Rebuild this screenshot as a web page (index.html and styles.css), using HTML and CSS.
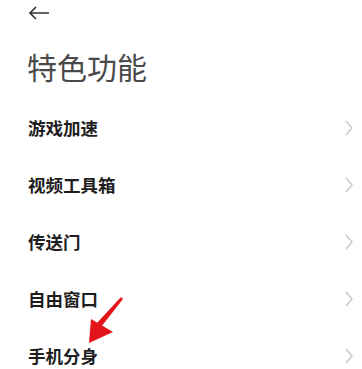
FILE: index.html
```html
<html lang="zh-CN">
<head>
    <meta charset="UTF-8">
    <meta name="viewport" content="width=device-width, initial-scale=1.0">
    <title>特色功能</title>
    <link rel="stylesheet" href="styles.css">
</head>
<body>
    <div class="topbar">
        <svg class="back-btn" width="22" height="14" viewBox="0 0 22 14">
            <path d="M21 7H2M8 1L2 7l6 6" fill="none" stroke="#333" stroke-width="1.6"/>
        </svg>
    </div>
    <h1 class="title">特色功能</h1>
    <div class="menu">
        <div class="menu-item"><span>游戏加速</span><svg class="chevron" width="8" height="16" viewBox="0 0 8 16"><path d="M1 1l6 7-6 7" fill="none" stroke="#c6c6c6" stroke-width="1.4"/></svg></div>
        <div class="menu-item"><span>视频工具箱</span><svg class="chevron" width="8" height="16" viewBox="0 0 8 16"><path d="M1 1l6 7-6 7" fill="none" stroke="#c6c6c6" stroke-width="1.4"/></svg></div>
        <div class="menu-item"><span>传送门</span><svg class="chevron" width="8" height="16" viewBox="0 0 8 16"><path d="M1 1l6 7-6 7" fill="none" stroke="#c6c6c6" stroke-width="1.4"/></svg></div>
        <div class="menu-item"><span>自由窗口</span><svg class="chevron" width="8" height="16" viewBox="0 0 8 16"><path d="M1 1l6 7-6 7" fill="none" stroke="#c6c6c6" stroke-width="1.4"/></svg></div>
        <div class="menu-item"><span>手机分身</span><svg class="chevron" width="8" height="16" viewBox="0 0 8 16"><path d="M1 1l6 7-6 7" fill="none" stroke="#c6c6c6" stroke-width="1.4"/></svg></div>
        <svg class="pointer" width="40" height="52" viewBox="0 0 40 52">
            <path d="M37 2L39 4 17 32 12 29Z" fill="#e3151b"/>
            <path d="M5 48L7 24 29 37Z" fill="#e3151b"/>
        </svg>
    </div>
</body>
</html>
```
FILE: styles.css
```css
body
{
    margin: 0;
    background: #fff;
    font-family: "Noto Sans CJK SC", "Noto Sans", sans-serif;
}
.topbar
{
    height: 26px;
    padding-left: 28px;
    display: flex;
    align-items: center;
}
.title
{
    margin: 20px 0 0 0;
    padding-left: 27px;
    font-size: 30px;
    line-height: 40px;
    font-weight: 400;
    color: #4a4a4a;
    height: 53px;
}
.menu
{
    position: relative;
}
.menu-item
{
    height: 57px;
    display: flex;
    align-items: center;
    justify-content: space-between;
    padding: 0 9px 0 28px;
    font-size: 17.5px;
    font-weight: 700;
    color: #1e1e1e;
}
.pointer
{
    position: absolute;
    left: 84px;
    top: 196px;
}
```
